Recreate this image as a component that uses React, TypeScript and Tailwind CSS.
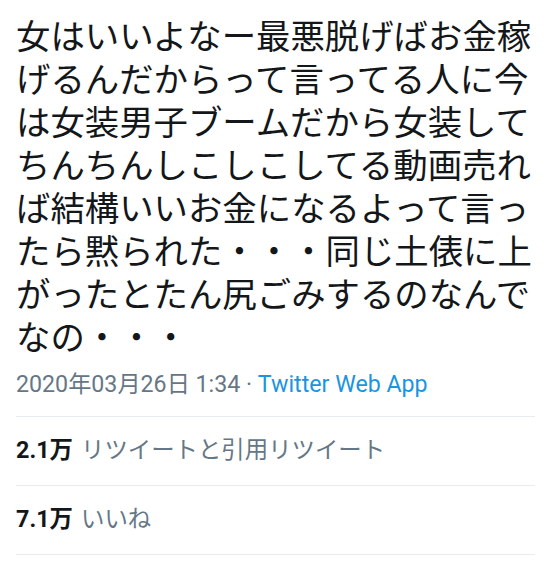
export default function App() {
  const lines = [
    "女はいいよなー最悪脱げばお金稼",
    "げるんだからって言ってる人に今",
    "は女装男子ブームだから女装して",
    "ちんちんしこしこしてる動画売れ",
    "ば結構いいお金になるよって言っ",
    "たら黙られた・・・同じ土俵に上",
    "がったとたん尻ごみするのなんで",
    "なの・・・",
  ];
  return (
    <div
      className="w-[553px] h-[565px] bg-white pl-[16px] pr-[18px] pt-[16px] overflow-hidden"
      style={{ fontFamily: "Roboto, 'Noto Sans CJK JP', sans-serif" }}
    >
      <p className="text-[34.4px] leading-[43px] text-[#14171a] whitespace-nowrap">
        {lines.map((l, i) => (
          <span key={i} className="block">
            {l}
          </span>
        ))}
      </p>
      <div className="mt-[12px] pb-[20px] text-[23.2px] leading-[24px] text-[#657786] whitespace-nowrap">
        2020年03月26日 1:34 · <span className="text-[#1b95e0]">Twitter Web App</span>
      </div>
      <div className="border-t border-[#e6ecf0] h-[69px] flex items-center text-[23.4px] whitespace-nowrap">
        <span className="font-bold text-[#14171a]">2.1万</span>
        <span className="ml-[8px] text-[#657786]">リツイートと引用リツイート</span>
      </div>
      <div className="border-t border-[#e6ecf0] h-[69px] flex items-center text-[23.4px] whitespace-nowrap">
        <span className="font-bold text-[#14171a]">7.1万</span>
        <span className="ml-[8px] text-[#657786]">いいね</span>
      </div>
      <div className="border-t border-[#e6ecf0]" />
    </div>
  );
}
